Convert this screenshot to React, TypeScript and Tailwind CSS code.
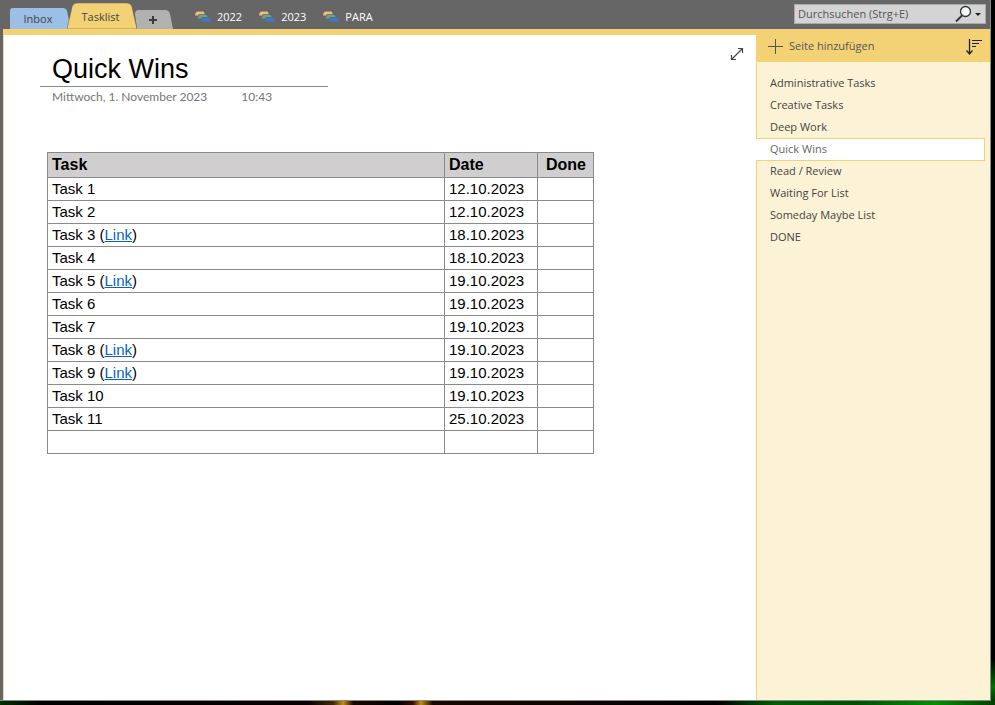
const uiFont = "font-['Open_Sans','Noto_Sans',sans-serif]";

const notebooks = ['2022', '2023', 'PARA'];

const pages = [
  'Administrative Tasks',
  'Creative Tasks',
  'Deep Work',
  'Quick Wins',
  'Read / Review',
  'Waiting For List',
  'Someday Maybe List',
  'DONE',
];

type Task = { name: string; date: string; link?: boolean };

const tasks: Task[] = [
  { name: 'Task 1', date: '12.10.2023' },
  { name: 'Task 2', date: '12.10.2023' },
  { name: 'Task 3', date: '18.10.2023', link: true },
  { name: 'Task 4', date: '18.10.2023' },
  { name: 'Task 5', date: '19.10.2023', link: true },
  { name: 'Task 6', date: '19.10.2023' },
  { name: 'Task 7', date: '19.10.2023' },
  { name: 'Task 8', date: '19.10.2023', link: true },
  { name: 'Task 9', date: '19.10.2023', link: true },
  { name: 'Task 10', date: '19.10.2023' },
  { name: 'Task 11', date: '25.10.2023' },
  { name: '', date: '' },
];

function NotebookIcon() {
  return (
    <svg width="16" height="11" viewBox="0 0 16 11" aria-hidden="true">
      <path d="M0 4 Q0.500 0.500 3 0.500 H8 Q9.500 0.500 9.500 3 H5 Q3.500 3 3 4.500 H0 Z" fill="#ecc078" />
      <path d="M3 7 Q3.500 3.500 6 3.500 H10 Q12 3.500 12.500 6 H8 Q6.500 6 6 7.500 H3 Z" fill="#6f9f90" />
      <path d="M6 10.500 Q7 6.500 9.500 6.500 H13 Q15.500 6.500 16 10.500 Z" fill="#467ab4" />
    </svg>
  );
}

function SectionTabs() {
  return (
    <nav className="flex items-end text-[11px] font-medium text-[#444]" aria-label="Abschnitte">
      <button type="button" className="relative h-[21px] w-[59px]">
        <svg className="absolute inset-0" width="59" height="21" viewBox="0 0 59 21" aria-hidden="true">
          <path d="M0 21 V3 Q0 0 3 0 H53 Q56 0 57 3 L59 12 V21 Z" fill="#9bbfe6" />
        </svg>
        <span className="relative block pr-[3px] leading-[22px]">Inbox</span>
      </button>
      <button type="button" aria-current="page" className="relative z-10 -ml-[2px] h-[26px] w-[70px]">
        <svg className="absolute inset-0" width="70" height="26" viewBox="0 0 70 26" aria-hidden="true">
          <path d="M0 26 L5 4 Q6 0 10 0 H60 Q64 0 65 4 L70 26 Z" fill="#f3d275" stroke="#5f5b50" strokeWidth="0.5" />
        </svg>
        <span className="relative block pr-[3px] leading-[27px]">Tasklist</span>
      </button>
      <button type="button" aria-label="Neuer Abschnitt" className="relative -ml-[2px] h-[19px] w-[38px]">
        <svg className="block" width="38" height="19" viewBox="0 0 38 19" aria-hidden="true">
          <path d="M2 19 L0 4 Q0 0 4 0 H30 Q34 0 35 4 L38 19 Z" fill="#b1b1b1" />
          <path d="M14 10 H22 M18 6 V14" stroke="#3b3b3b" strokeWidth="2" />
        </svg>
      </button>
    </nav>
  );
}

function TopBar() {
  return (
    <header className="flex h-[29px] items-end justify-between bg-[#666] pl-[10px] pr-1">
      <div className="flex items-end">
        <SectionTabs />
        <div className="ml-[22px] flex h-[29px] items-center gap-[17px] pt-1 text-[11px] font-medium text-white">
          {notebooks.map((name) => (
            <button key={name} type="button" className="flex items-center gap-[6px] leading-[25px]">
              <NotebookIcon />
              {name}
            </button>
          ))}
        </div>
      </div>
      <form role="search" className="mb-[5px] flex h-5 w-48 items-center border border-[#aaa] bg-[#d4d4d4]">
        <input
          type="text"
          aria-label="Durchsuchen"
          placeholder="Durchsuchen (Strg+E)"
          className="min-w-0 flex-1 bg-transparent px-[3px] text-[11px] outline-none placeholder:text-[#555] placeholder:opacity-100"
        />
        <button type="button" aria-label="Suchen" className="pr-[3px]">
          <svg width="27" height="18" viewBox="0 0 27 18" aria-hidden="true">
            <path d="M7 10.500 L1 16.500" stroke="#333" strokeWidth="1.8" />
            <circle cx="10.500" cy="6.500" r="5" fill="#f4f8f8" stroke="#333" strokeWidth="1.3" />
            <path d="M20 8 H26 L23 11 Z" fill="#222" />
          </svg>
        </button>
      </form>
    </header>
  );
}

function TaskTable() {
  return (
    <table className="w-[547px] table-fixed border-collapse text-[15px] text-black">
      <colgroup>
        <col className="w-[397px]" />
        <col className="w-[93px]" />
        <col className="w-[56px]" />
      </colgroup>
      <thead>
        <tr className="h-[25px] bg-[#d0cece] text-[16px] leading-5">
          <th scope="col" className="border border-[#8a8a8a] px-1 py-0 text-left">Task</th>
          <th scope="col" className="border border-[#8a8a8a] px-1 py-0 text-left">Date</th>
          <th scope="col" className="border border-[#8a8a8a] pl-2 pr-1 py-0 text-left">Done</th>
        </tr>
      </thead>
      <tbody>
        {tasks.map((task, i) => (
          <tr key={i} className="h-[23px] leading-5">
            <td className="border border-[#8a8a8a] px-1 py-0">
              {task.name}
              {task.link && (
                <>
                  {' ('}
                  <a href="#" className="text-[#0563c1] underline">Link</a>)
                </>
              )}
            </td>
            <td className="border border-[#8a8a8a] px-1 py-0">{task.date}</td>
            <td className="border border-[#8a8a8a] px-1 py-0" />
          </tr>
        ))}
      </tbody>
    </table>
  );
}

function NotePage() {
  return (
    <main className="flex min-w-0 flex-1 border-l border-[#f3d9a0] bg-white font-['Liberation_Sans',Arial,sans-serif]">
      <div className="flex-1 pl-9 pt-[17px]">
        <h1 className="w-72 border-b border-[#8a8a8a] pl-3 text-[27px] leading-[34px] text-black">Quick Wins</h1>
        <p className="flex gap-[34px] pl-3 font-['Lato',sans-serif] text-[12px] leading-5 text-[#767676]">
          <span>Mittwoch, 1. November 2023</span>
          <span>10:43</span>
        </p>
        <div className="pl-[7px] pt-[45px]">
          <TaskTable />
        </div>
      </div>
      <button type="button" aria-label="Ganzseitenansicht" className="mr-3 mt-3 h-[14px] w-[14px]">
        <svg width="14" height="14" viewBox="0 0 14 14" fill="none" stroke="#444" strokeWidth="1.2" aria-hidden="true">
          <path d="M1.500 12.500 L12.500 1.500 M8 1.500 H12.500 V6 M1.500 8 V12.500 H6" />
        </svg>
      </button>
    </main>
  );
}

function PageList() {
  return (
    <aside className="flex w-[234px] flex-col text-[11px] font-medium text-[#444]">
      <div className="flex h-[27px] items-center justify-between bg-[#f3d275] pb-[5px] pl-3 pr-2">
        <button type="button" className="flex items-center gap-[6px] text-[#555]">
          <svg width="15" height="15" viewBox="0 0 15 15" stroke="#555" aria-hidden="true">
            <path d="M0 7.500 H15 M7.500 0 V15" />
          </svg>
          Seite hinzufügen
        </button>
        <button type="button" aria-label="Sortieren">
          <svg width="16" height="17" viewBox="0 0 16 17" fill="none" stroke="#222" aria-hidden="true">
            <path d="M3.500 1 V16 M0.500 12.500 L3.500 16 L6.500 12.500" strokeWidth="1.3" />
            <path d="M6 2.500 H16 M6 5.500 H13 M6 8.500 H10" />
          </svg>
        </button>
      </div>
      <ul className="flex flex-1 flex-col bg-[#fcf2d6]">
        <li className="h-[10px] border-l border-[#f3d275]" />
        {pages.map((page) => (
          <li
            key={page}
            className={
              page === 'Quick Wins'
                ? 'mr-[5px] flex h-[23px] -mb-px border-y border-r border-[#f3d275] bg-white'
                : 'flex h-[22px] border-l border-[#f3d275]'
            }
          >
            <button
              type="button"
              className={
                page === 'Quick Wins'
                  ? 'flex-1 pb-px pl-[14px] text-left leading-5 text-[#666]'
                  : 'flex-1 pl-[13px] text-left leading-[22px]'
              }
            >
              {page}
            </button>
          </li>
        ))}
        <li className="flex-1 border-l border-[#f3d275]" />
      </ul>
    </aside>
  );
}

export default function App() {
  return (
    <div className="flex h-screen flex-col bg-black">
      <div className="flex min-h-0 flex-1 bg-[linear-gradient(to_bottom,#000_94%,#007000_98%,#003800)] pr-1">
        <div className={`flex min-w-0 flex-1 flex-col border-b border-r border-[#8a8a8a] bg-[#666] ${uiFont}`}>
          <TopBar />
          <div className="ml-[3px] flex flex-1 flex-col border-t-[6px] border-[#f3d275]">
            <div className="flex flex-1">
              <NotePage />
              <PageList />
            </div>
          </div>
        </div>
      </div>
      <div className="h-1 bg-[linear-gradient(to_right,#003000,#000_4%,#080000_31%,#402808_33.500%,#c09010_34.500%,#180800_35.500%,#000_40%,#301000_41.500%,#c09010_42.300%,#180800_43.500%,#000_72%,#006000_78%,#005000_86%,#009000_94%,#004000)]" />
    </div>
  );
}
